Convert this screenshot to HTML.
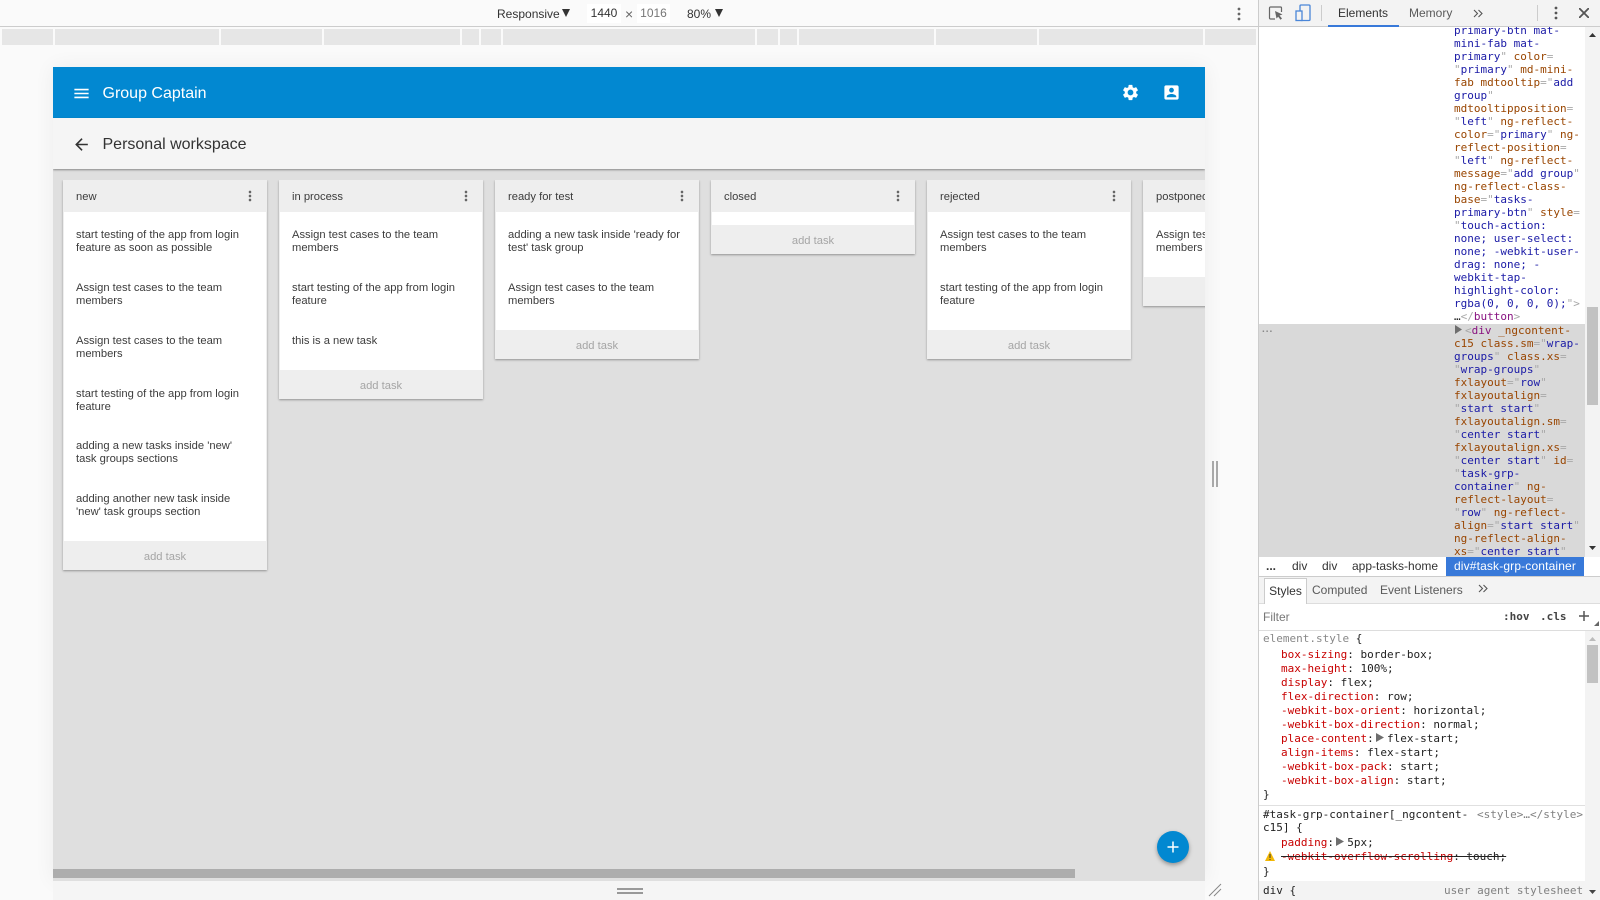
<!DOCTYPE html>
<html><head><meta charset="utf-8"><title>Group Captain</title>
<style>
html,body{margin:0;padding:0;width:1600px;height:900px;overflow:hidden;background:#fafafa;font-family:"Liberation Sans",sans-serif;color:#333}
div,span.a,svg,pre{position:absolute}
.t{white-space:nowrap}
.col{width:204px;background:#eee;box-shadow:0 1px 2px rgba(0,0,0,.35);top:180px;overflow:hidden}
.hd{position:absolute;left:13px;top:11px;font-size:11.2px;line-height:13px;color:#3c3c3c}
.body{position:absolute;left:1px;right:1px;top:32px;background:#fff}
.task{position:absolute;left:12px;width:185px;font-size:11.2px;line-height:13px;color:#3c3c3c;margin-top:2px}
.add{position:absolute;left:0;right:0;bottom:0;height:29px;line-height:33px;text-align:center;font-size:11.2px;color:#a5a5a5}
.mv{position:absolute;left:179px;top:8px;width:16px;height:16px;fill:#666}
pre{margin:0;font:11px/13px "DejaVu Sans Mono","Liberation Mono",monospace;color:#222}
.n{color:#994500}.v{color:#1a1aa6}.g{color:#a8a8a8}.m{color:#881280}
.p{color:#c80000}
.dt{font-size:12px;color:#333;line-height:14px}
</style></head><body>
<!-- device toolbar -->
<div style="left:0;top:0;width:1258px;height:26px;background:#fafafa;border-bottom:1px solid #ccc"></div>
<div class="t dt" style="left:497px;top:7px">Responsive</div>
<svg style="left:562px;top:9px" width="8" height="8"><path d="M0 0h8L4 8z" fill="#333"/></svg>
<div class="t dt" style="left:587px;top:4px;width:34px;height:19px;background:#fff;line-height:19px;text-align:center">1440</div>
<div class="t dt" style="left:625px;top:7px;color:#666;font-size:14px">×</div>
<div class="t dt" style="left:637px;top:4px;width:33px;height:19px;background:#fff;line-height:19px;text-align:center;color:#777">1016</div>
<div class="t dt" style="left:687px;top:7px">80%</div>
<svg style="left:715px;top:9px" width="8" height="8"><path d="M0 0h8L4 8z" fill="#333"/></svg>
<svg style="left:1237px;top:7px" width="4" height="14"><circle cx="2" cy="2" r="1.4" fill="#666"/><circle cx="2" cy="7" r="1.4" fill="#666"/><circle cx="2" cy="12" r="1.4" fill="#666"/></svg>
<!-- ruler -->
<div style="left:2px;top:29px;width:1254px;height:16px;background:#e6e6e6"></div>
<div style="left:53px;top:29px;width:2px;height:16px;background:#fafafa"></div>
<div style="left:219px;top:29px;width:2px;height:16px;background:#fafafa"></div>
<div style="left:322px;top:29px;width:2px;height:16px;background:#fafafa"></div>
<div style="left:460px;top:29px;width:2px;height:16px;background:#fafafa"></div>
<div style="left:479px;top:29px;width:2px;height:16px;background:#fafafa"></div>
<div style="left:501px;top:29px;width:2px;height:16px;background:#fafafa"></div>
<div style="left:755px;top:29px;width:2px;height:16px;background:#fafafa"></div>
<div style="left:778px;top:29px;width:2px;height:16px;background:#fafafa"></div>
<div style="left:797px;top:29px;width:2px;height:16px;background:#fafafa"></div>
<div style="left:934px;top:29px;width:2px;height:16px;background:#fafafa"></div>
<div style="left:1037px;top:29px;width:2px;height:16px;background:#fafafa"></div>
<div style="left:1203px;top:29px;width:2px;height:16px;background:#fafafa"></div>
<!-- app viewport -->
<div style="left:53px;top:67px;width:1152px;height:814px;background:#dfdfdf;box-shadow:0 0 20px rgba(0,0,0,.06);overflow:hidden">
  <div style="left:0;top:0;width:1152px;height:51px;background:#0288d1"></div>
  <svg style="left:19px;top:16.5px" width="19" height="19" viewBox="0 0 24 24" fill="#fff"><path d="M3 18h18v-2H3v2zm0-5h18v-2H3v2zm0-7v2h18V6H3z"/></svg>
  <div class="t" style="left:49.5px;top:17px;font-size:16px;line-height:19px;color:#fff">Group Captain</div>
  <svg style="left:1067.5px;top:15.5px" width="19" height="19" viewBox="0 0 24 24" fill="#fff"><path d="M19.14 12.94c.04-.3.06-.61.06-.94 0-.32-.02-.64-.07-.94l2.03-1.58c.18-.14.23-.41.12-.61l-1.92-3.32c-.12-.22-.37-.29-.59-.22l-2.39.96c-.5-.38-1.03-.7-1.62-.94l-.36-2.54c-.04-.24-.24-.41-.48-.41h-3.84c-.24 0-.43.17-.47.41l-.36 2.54c-.59.24-1.13.57-1.62.94l-2.39-.96c-.22-.08-.47 0-.59.22L2.74 8.87c-.12.21-.08.47.12.61l2.03 1.58c-.05.3-.09.63-.09.94s.02.64.07.94l-2.03 1.58c-.18.14-.23.41-.12.61l1.92 3.32c.12.22.37.29.59.22l2.39-.96c.5.38 1.03.7 1.62.94l.36 2.54c.05.24.24.41.48.41h3.84c.24 0 .44-.17.47-.41l.36-2.54c.59-.24 1.13-.56 1.62-.94l2.39.96c.22.08.47 0 .59-.22l1.92-3.32c.12-.22.07-.47-.12-.61l-2.01-1.58zM12 15.6c-1.98 0-3.6-1.62-3.6-3.6s1.62-3.6 3.6-3.6 3.6 1.62 3.6 3.6-1.62 3.6-3.6 3.6z"/></svg>
  <svg style="left:1108.5px;top:15.5px" width="19" height="19" viewBox="0 0 24 24" fill="#fff"><path d="M3 5v14c0 1.1.89 2 2 2h14c1.1 0 2-.9 2-2V5c0-1.1-.9-2-2-2H5c-1.11 0-2 .9-2 2zm12 4c0 1.66-1.34 3-3 3s-3-1.34-3-3 1.34-3 3-3 3 1.34 3 3zm-9 8c0-2 4-3.1 6-3.1s6 1.1 6 3.1v1H6v-1z"/></svg>
  <div style="left:0;top:51px;width:1152px;height:51px;background:#f5f5f5;box-shadow:0 1px 2px rgba(0,0,0,.4)"></div>
  <svg style="left:19px;top:67.5px" width="19" height="19" viewBox="0 0 24 24" fill="#333"><path d="M20 11H7.83l5.59-5.59L12 4l-8 8 8 8 1.41-1.41L7.83 13H20v-2z"/></svg>
  <div class="t" style="left:49.5px;top:68px;font-size:16px;line-height:19px;color:#333">Personal workspace</div>
</div>
<div style="left:53px;top:180px;width:1152px;height:690px;overflow:hidden">
<div style="left:0;top:0;width:1152px;height:690px">
<div class="col" style="left:10px;top:0;height:390px">
  <div class="hd">new</div><svg class="mv" viewBox="0 0 24 24"><path d="M12 8c1.1 0 2-.9 2-2s-.9-2-2-2-2 .9-2 2 .9 2 2 2zm0 2c-1.1 0-2 .9-2 2s.9 2 2 2 2-.9 2-2-.9-2-2-2zm0 6c-1.1 0-2 .9-2 2s.9 2 2 2 2-.9 2-2-.9-2-2-2z"/></svg>
  <div class="body" style="height:329px">
    <div class="task" style="top:15px">start testing of the app from login<br>feature as soon as possible</div>
    <div class="task" style="top:68px">Assign test cases to the team<br>members</div>
    <div class="task" style="top:121px">Assign test cases to the team<br>members</div>
    <div class="task" style="top:174px">start testing of the app from login<br>feature</div>
    <div class="task" style="top:226px">adding a new tasks inside 'new'<br>task groups sections</div>
    <div class="task" style="top:279px">adding another new task inside<br>'new' task groups section</div>
  </div><div class="add">add task</div>
</div>
<div class="col" style="left:226px;top:0;height:219px">
  <div class="hd">in process</div><svg class="mv" viewBox="0 0 24 24"><path d="M12 8c1.1 0 2-.9 2-2s-.9-2-2-2-2 .9-2 2 .9 2 2 2zm0 2c-1.1 0-2 .9-2 2s.9 2 2 2 2-.9 2-2-.9-2-2-2zm0 6c-1.1 0-2 .9-2 2s.9 2 2 2 2-.9 2-2-.9-2-2-2z"/></svg>
  <div class="body" style="height:158px">
    <div class="task" style="top:15px">Assign test cases to the team<br>members</div>
    <div class="task" style="top:68px">start testing of the app from login<br>feature</div>
    <div class="task" style="top:121px">this is a new task</div>
  </div><div class="add">add task</div>
</div>
<div class="col" style="left:442px;top:0;height:179px">
  <div class="hd">ready for test</div><svg class="mv" viewBox="0 0 24 24"><path d="M12 8c1.1 0 2-.9 2-2s-.9-2-2-2-2 .9-2 2 .9 2 2 2zm0 2c-1.1 0-2 .9-2 2s.9 2 2 2 2-.9 2-2-.9-2-2-2zm0 6c-1.1 0-2 .9-2 2s.9 2 2 2 2-.9 2-2-.9-2-2-2z"/></svg>
  <div class="body" style="height:118px">
    <div class="task" style="top:15px">adding a new task inside 'ready for<br>test' task group</div>
    <div class="task" style="top:68px">Assign test cases to the team<br>members</div>
  </div><div class="add">add task</div>
</div>
<div class="col" style="left:658px;top:0;height:74px">
  <div class="hd">closed</div><svg class="mv" viewBox="0 0 24 24"><path d="M12 8c1.1 0 2-.9 2-2s-.9-2-2-2-2 .9-2 2 .9 2 2 2zm0 2c-1.1 0-2 .9-2 2s.9 2 2 2 2-.9 2-2-.9-2-2-2zm0 6c-1.1 0-2 .9-2 2s.9 2 2 2 2-.9 2-2-.9-2-2-2z"/></svg>
  <div class="body" style="height:13px"></div><div class="add">add task</div>
</div>
<div class="col" style="left:874px;top:0;height:179px">
  <div class="hd">rejected</div><svg class="mv" viewBox="0 0 24 24"><path d="M12 8c1.1 0 2-.9 2-2s-.9-2-2-2-2 .9-2 2 .9 2 2 2zm0 2c-1.1 0-2 .9-2 2s.9 2 2 2 2-.9 2-2-.9-2-2-2zm0 6c-1.1 0-2 .9-2 2s.9 2 2 2 2-.9 2-2-.9-2-2-2z"/></svg>
  <div class="body" style="height:118px">
    <div class="task" style="top:15px">Assign test cases to the team<br>members</div>
    <div class="task" style="top:68px">start testing of the app from login<br>feature</div>
  </div><div class="add">add task</div>
</div>
<div class="col" style="left:1090px;top:0;height:126px">
  <div class="hd">postponed</div>
  <div class="body" style="height:65px">
    <div class="task" style="top:15px">Assign test cases to the team<br>members</div>
  </div><div class="add">add task</div>
</div>
</div>
</div>
<!-- horizontal scrollbar & FAB -->
<div style="left:53px;top:869px;width:1022px;height:9px;background:#adadad"></div>
<div style="left:1157px;top:831px;width:32px;height:32px;border-radius:50%;background:#0288d1;box-shadow:0 2px 4px rgba(0,0,0,.35)"></div>
<svg style="left:1166px;top:840px" width="14" height="14" viewBox="0 0 14 14"><path d="M7 1.500v11M1.500 7h11" stroke="#fff" stroke-width="1.500" fill="none"/></svg>
<!-- handles -->
<div style="left:53px;top:881px;width:1152px;height:19px;background:#f5f5f5"></div>
<div style="left:617px;top:888px;width:26px;height:2px;background:#999"></div>
<div style="left:617px;top:892px;width:26px;height:2px;background:#999"></div>
<svg style="left:1208px;top:883px" width="14" height="14"><path d="M1 13L13 1M6 13L13 6" stroke="#888" stroke-width="1" fill="none"/></svg>
<div style="left:1212px;top:461px;width:2px;height:26px;background:#a8a8a8"></div>
<div style="left:1216px;top:461px;width:2px;height:26px;background:#a8a8a8"></div>

<!-- devtools -->
<div style="left:1258px;top:0;width:342px;height:900px;background:#fff;border-left:1px solid #ccc;box-sizing:border-box"></div>
<div style="left:1259px;top:0;width:341px;height:26px;background:#f3f3f3;border-bottom:1px solid #ccc"></div>
<svg style="left:1268px;top:5px" width="16" height="16" viewBox="0 0 16 16" fill="none"><path d="M7 14H2.500a1 1 0 0 1-1-1V3a1 1 0 0 1 1-1h10a1 1 0 0 1 1 1v4" stroke="#666" stroke-width="1.200"/><path d="M7 6l7.500 3.500-3 1 2.500 3-1.500 1.300-2.300-3L8.500 13.500z" fill="#666"/></svg>
<svg style="left:1295px;top:4px" width="16" height="18" viewBox="0 0 16 18" fill="none" stroke="#4a86d8" stroke-width="1.300"><rect x="5" y="1" width="10" height="15.500" rx="1"/><rect x="1" y="7" width="6" height="9.500" fill="#f3f3f3"/></svg>
<div style="left:1321px;top:5px;width:1px;height:16px;background:#ccc"></div>
<div class="t dt" style="left:1338px;top:6px">Elements</div>
<div style="left:1328px;top:25px;width:71px;height:2px;background:#3879d9"></div>
<div class="t dt" style="left:1409px;top:6px;color:#5a5a5a">Memory</div>
<svg style="left:1473px;top:9px" width="10" height="9" fill="none" stroke="#555" stroke-width="1.100"><path d="M1 1l3.500 3.500L1 8M5.500 1L9 4.500 5.500 8"/></svg>
<div style="left:1537px;top:5px;width:1px;height:16px;background:#ccc"></div>
<svg style="left:1554px;top:6px" width="4" height="14"><circle cx="2" cy="2" r="1.4" fill="#555"/><circle cx="2" cy="7" r="1.4" fill="#555"/><circle cx="2" cy="12" r="1.4" fill="#555"/></svg>
<svg style="left:1579px;top:8px" width="10" height="10" stroke="#555" stroke-width="1.800"><path d="M0 0l10 10M10 0L0 10"/></svg>

<div style="left:1259px;top:27px;width:326px;height:530px;overflow:hidden;background:#fff">
<pre style="left:195px;top:-3.500px;"><span class="v">primary-btn mat-
mini-fab mat-
primary</span><span class="g">"</span> <span class="n">color</span><span class="g">=</span>
<span class="g">"</span><span class="v">primary</span><span class="g">"</span> <span class="n">md-mini-
fab</span> <span class="n">mdtooltip</span><span class="g">="</span><span class="v">add
group</span><span class="g">"</span>
<span class="n">mdtooltipposition</span><span class="g">=</span>
<span class="g">"</span><span class="v">left</span><span class="g">"</span> <span class="n">ng-reflect-
color</span><span class="g">="</span><span class="v">primary</span><span class="g">"</span> <span class="n">ng-
reflect-position</span><span class="g">=</span>
<span class="g">"</span><span class="v">left</span><span class="g">"</span> <span class="n">ng-reflect-
message</span><span class="g">="</span><span class="v">add group</span><span class="g">"</span>
<span class="n">ng-reflect-class-
base</span><span class="g">="</span><span class="v">tasks-
primary-btn</span><span class="g">"</span> <span class="n">style</span><span class="g">=</span>
<span class="g">"</span><span class="v">touch-action:
none; user-select:
none; -webkit-user-
drag: none; -
webkit-tap-
highlight-color:
rgba(0, 0, 0, 0);</span><span class="g">"&gt;</span>
…<span class="g">&lt;/</span><span class="m">button</span><span class="g">&gt;</span></pre>
<div style="left:0;top:297px;width:326px;height:233px;background:#d9d9d9"></div>
<div class="t" style="left:3px;top:297px;font:bold 10px/12px 'Liberation Sans';color:#888;letter-spacing:1px">...</div>
<svg style="left:195px;top:298px" width="8" height="9"><path d="M1 0l7 4.500L1 9z" fill="#6e6e6e"/></svg>
<pre style="left:195px;top:296.500px"><span class="g" style="margin-left:11px">&lt;</span><span class="m">div</span> <span class="n">_ngcontent-
c15</span> <span class="n">class.sm</span><span class="g">="</span><span class="v">wrap-
groups</span><span class="g">"</span> <span class="n">class.xs</span><span class="g">=</span>
<span class="g">"</span><span class="v">wrap-groups</span><span class="g">"</span>
<span class="n">fxlayout</span><span class="g">="</span><span class="v">row</span><span class="g">"</span>
<span class="n">fxlayoutalign</span><span class="g">=</span>
<span class="g">"</span><span class="v">start start</span><span class="g">"</span>
<span class="n">fxlayoutalign.sm</span><span class="g">=</span>
<span class="g">"</span><span class="v">center start</span><span class="g">"</span>
<span class="n">fxlayoutalign.xs</span><span class="g">=</span>
<span class="g">"</span><span class="v">center start</span><span class="g">"</span> <span class="n">id</span><span class="g">=</span>
<span class="g">"</span><span class="v">task-grp-
container</span><span class="g">"</span> <span class="n">ng-
reflect-layout</span><span class="g">=</span>
<span class="g">"</span><span class="v">row</span><span class="g">"</span> <span class="n">ng-reflect-
align</span><span class="g">="</span><span class="v">start start</span><span class="g">"</span>
<span class="n">ng-reflect-align-
xs</span><span class="g">="</span><span class="v">center start</span><span class="g">"</span></pre>
</div>
<div style="left:1585px;top:27px;width:15px;height:530px;background:#f3f3f3"></div>
<svg style="left:1589px;top:33px" width="7" height="4"><path d="M0 4L3.500 0 7 4z" fill="#333"/></svg>
<svg style="left:1589px;top:546px" width="7" height="4"><path d="M0 0l3.500 4L7 0z" fill="#333"/></svg>
<div style="left:1587px;top:307px;width:11px;height:98px;background:#c2c2c2"></div>

<!-- breadcrumbs -->
<div style="left:1259px;top:557px;width:341px;height:19px;background:#fff;border-bottom:1px solid #ccc"></div>
<div class="t dt" style="left:1266px;top:559px;font-weight:bold">...</div>
<div class="t dt" style="left:1292px;top:559px">div</div>
<div class="t dt" style="left:1322px;top:559px">div</div>
<div class="t dt" style="left:1352px;top:559px">app-tasks-home</div>
<div class="t dt" style="left:1446px;top:557px;width:138px;height:19px;background:#3879d9;color:#fff;line-height:19px;text-align:center;letter-spacing:.15px">div#task-grp-container</div>
<!-- tabs -->
<div style="left:1259px;top:577px;width:341px;height:26px;background:#f3f3f3;border-bottom:1px solid #ddd"></div>
<div class="t dt" style="left:1264px;top:578px;width:41px;height:25px;background:#fff;border:1px solid #ccc;border-bottom:0;line-height:25px;text-align:center;box-sizing:content-box">Styles</div>
<div class="t dt" style="left:1312px;top:583px;color:#5a5a5a">Computed</div>
<div class="t dt" style="left:1380px;top:583px;color:#5a5a5a">Event Listeners</div>
<svg style="left:1478px;top:584px" width="10" height="9" fill="none" stroke="#555" stroke-width="1.100"><path d="M1 1l3.500 3.500L1 8M5.500 1L9 4.500 5.500 8"/></svg>
<!-- filter -->
<div style="left:1259px;top:604px;width:341px;height:26px;background:#fff;border-bottom:1px solid #ddd"></div>
<div class="t dt" style="left:1263px;top:610px;color:#777">Filter</div>
<div class="t" style="left:1503px;top:610px;font:bold 11px/14px 'DejaVu Sans Mono',monospace;color:#444">:hov</div>
<div class="t" style="left:1540px;top:610px;font:bold 11px/14px 'DejaVu Sans Mono',monospace;color:#444">.cls</div>
<svg style="left:1578px;top:610px" width="12" height="12"><path d="M6 1v10M1 6h10" stroke="#555" stroke-width="1.500"/></svg>
<svg style="left:1594px;top:621px" width="5" height="5"><path d="M5 0v5H0z" fill="#666"/></svg>
<!-- styles -->
<div style="left:1259px;top:631px;width:326px;height:269px;overflow:hidden;background:#fff">
<pre style="left:4px;top:0.500px"><span class="g" style="color:#888">element.style</span> {</pre>
<pre style="left:22px;top:16.500px;line-height:14px"><span class="p">box-sizing</span>: border-box;
<span class="p">max-height</span>: 100%;
<span class="p">display</span>: flex;
<span class="p">flex-direction</span>: row;
<span class="p">-webkit-box-orient</span>: horizontal;
<span class="p">-webkit-box-direction</span>: normal;
<span class="p">place-content</span>:  flex-start;
<span class="p">align-items</span>: flex-start;
<span class="p">-webkit-box-pack</span>: start;
<span class="p">-webkit-box-align</span>: start;</pre>
<svg style="left:116.500px;top:102px" width="8" height="9"><path d="M0 0l8 4.500L0 9z" fill="#6e6e6e"/></svg>
<pre style="left:4px;top:156.500px">}</pre>
<div style="left:0;top:174px;width:326px;height:1px;background:#e0e0e0"></div>
<pre style="left:4px;top:176.500px;">#task-grp-container[_ngcontent-
c15] {</pre>
<pre style="left:218px;top:176.500px;color:#808080">&lt;style&gt;…&lt;/style&gt;</pre>
<pre style="left:22px;top:204.500px"><span class="p">padding</span>:  5px;</pre>
<svg style="left:77px;top:206px" width="8" height="9"><path d="M0 0l8 4.500L0 9z" fill="#6e6e6e"/></svg>
<svg style="left:6px;top:220px" width="10" height="10"><path d="M5 0L10 10H0z" fill="#f2b705"/><path d="M4.500 3h1v4h-1zM4.500 8h1v1h-1z" fill="#333"/></svg>
<pre style="left:22px;top:218.500px;text-decoration:line-through"><span class="p">-webkit-overflow-scrolling</span>: touch;</pre>
<pre style="left:4px;top:233.500px">}</pre>
<div style="left:0;top:250px;width:341px;height:19px;background:#f3f3f3"></div>
<pre style="left:4px;top:252.500px">div {</pre>
<pre style="left:185px;top:252.500px;color:#808080">user agent stylesheet</pre>
</div>
<div style="left:1585px;top:631px;width:15px;height:250px;background:#f3f3f3"></div>
<svg style="left:1589px;top:637px" width="7" height="4"><path d="M0 4L3.500 0 7 4z" fill="#bbb"/></svg>
<div style="left:1587px;top:645px;width:11px;height:38px;background:#c2c2c2"></div>
<div style="left:1585px;top:881px;width:15px;height:19px;background:#f3f3f3"></div>
<svg style="left:1589px;top:890px" width="7" height="4"><path d="M0 0l3.500 4L7 0z" fill="#444"/></svg>
</body></html>
